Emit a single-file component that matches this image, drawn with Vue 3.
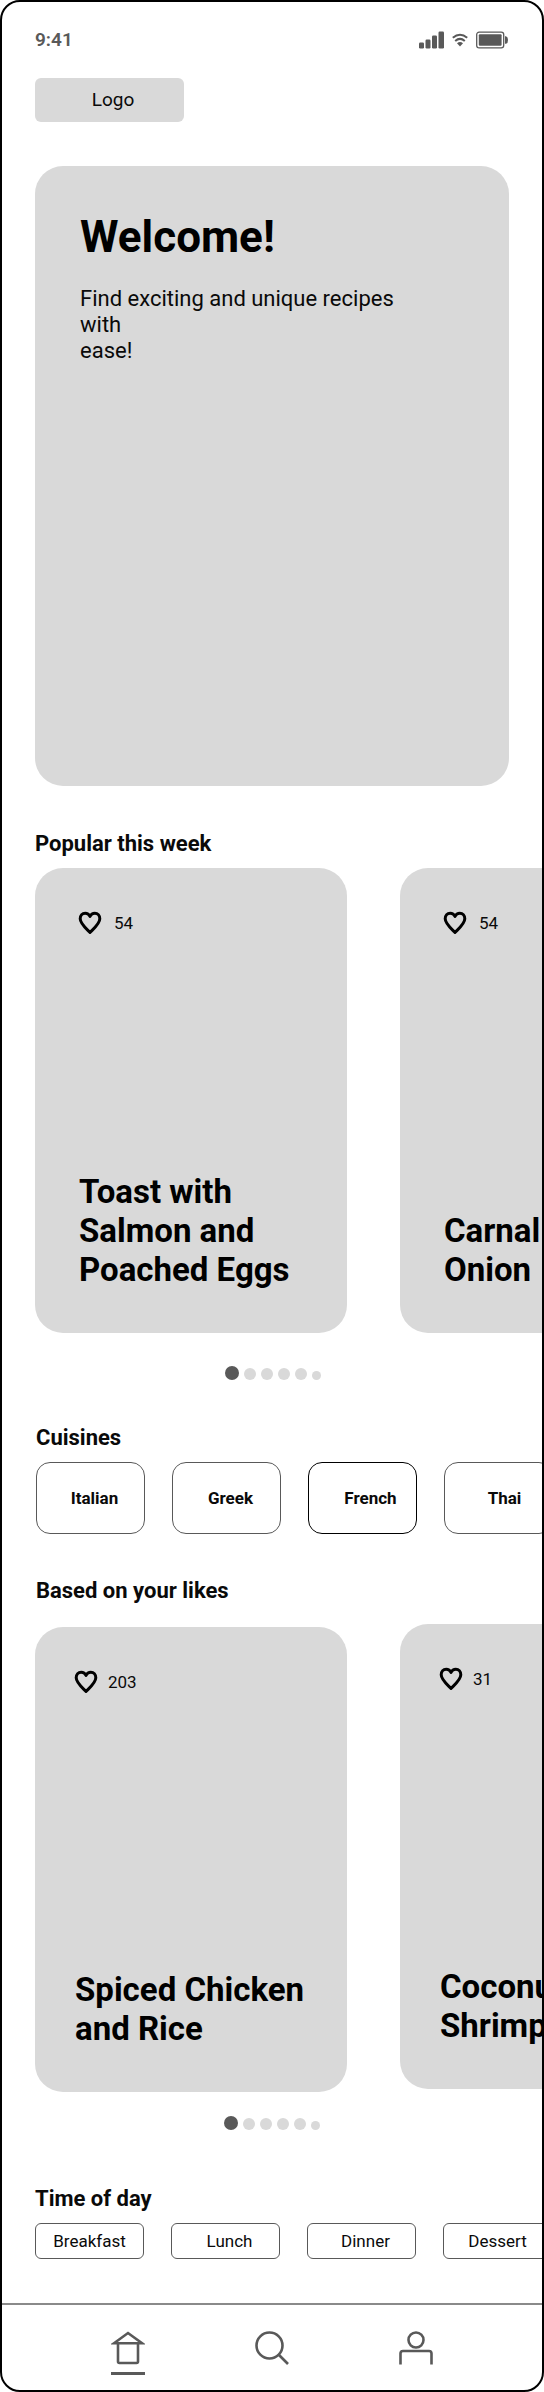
<script setup>
const popular = [
  { title: ['Toast with', 'Salmon and', 'Poached Eggs'], likes: 54 },
  { title: ['Carnal', 'Onion'], likes: 54 },
]
const liked = [
  { title: ['Spiced Chicken', 'and Rice'], likes: 203 },
  { title: ['Coconut', 'Shrimp'], likes: 31 },
]
const cuisines = ['Italian', 'Greek', 'French', 'Thai']
const times = ['Breakfast', 'Lunch', 'Dinner', 'Dessert']
</script>

<template>
  <div class="screen">
    <header class="status">
      <span class="clock">9:41</span>
      <span class="indicators">
        <svg width="25" height="18" viewBox="0 0 25 18" fill="#595959" aria-hidden="true">
          <rect x="0" y="11.5" width="5" height="6" rx="1.2" />
          <rect x="6.5" y="8.5" width="5" height="9" rx="1.2" />
          <rect x="13" y="4.5" width="5" height="13" rx="1.2" />
          <rect x="19.5" y="0.5" width="5.5" height="17" rx="1.2" />
        </svg>
        <svg width="16" height="18" viewBox="0 0 16 18" fill="none" stroke="#595959" stroke-width="2" aria-hidden="true">
          <path d="M0.8 6.8Q8 0.6 15.2 6.8" />
          <path d="M3.2 10Q8 5.8 12.8 10" />
          <path d="M5 12.2Q8 9.8 11 12.2L8 15.5Z" fill="#595959" stroke="none" />
        </svg>
        <svg width="32" height="18" viewBox="0 0 32 18" aria-hidden="true">
          <rect x="0.7" y="1.2" width="27" height="15.6" rx="2.4" fill="none" stroke="#595959" stroke-width="1.3" />
          <rect x="2.8" y="3.2" width="22.8" height="11.6" rx="1" fill="#595959" />
          <path d="M29 5.2h1q2 0.6 2 3.8t-2 3.8h-1z" fill="#595959" />
        </svg>
      </span>
    </header>

    <a class="logo" href="#">Logo</a>

    <section class="hero">
      <h1>Welcome!</h1>
      <p>Find exciting and unique recipes with<br />ease!</p>
    </section>

    <section class="popular">
      <h2>Popular this week</h2>
      <div class="cards">
        <article v-for="item in popular" :key="item.title[0]" class="card">
          <button class="like" type="button" aria-label="Like">
            <svg width="24" height="24" viewBox="0 0 24 24" fill="none" stroke="#000" stroke-width="3" stroke-linejoin="round" aria-hidden="true">
              <path d="M12 21.5C7.5 17 2.2 12.6 2.2 7.8C2.2 4.6 4.3 2.2 7.2 2.2C9.4 2.2 11 3.4 12 5.4C13 3.4 14.6 2.2 16.8 2.2C19.7 2.2 21.8 4.6 21.8 7.8C21.8 12.6 16.5 17 12 21.5Z" />
            </svg>
            <span>{{ item.likes }}</span>
          </button>
          <h3><span v-for="line in item.title" :key="line">{{ line }}</span></h3>
        </article>
      </div>
      <div class="dots"><i v-for="n in 6" :key="n"></i></div>
    </section>

    <section class="cuisines">
      <h2>Cuisines</h2>
      <div class="row">
        <button v-for="name in cuisines" :key="name" type="button" :class="['tile', name.toLowerCase()]">{{ name }}</button>
      </div>
    </section>

    <section class="liked">
      <h2>Based on your likes</h2>
      <div class="cards">
        <article v-for="item in liked" :key="item.title[0]" class="card">
          <button class="like" type="button" aria-label="Like">
            <svg width="24" height="24" viewBox="0 0 24 24" fill="none" stroke="#000" stroke-width="3" stroke-linejoin="round" aria-hidden="true">
              <path d="M12 21.5C7.5 17 2.2 12.6 2.2 7.8C2.2 4.6 4.3 2.2 7.2 2.2C9.4 2.2 11 3.4 12 5.4C13 3.4 14.6 2.2 16.8 2.2C19.7 2.2 21.8 4.6 21.8 7.8C21.8 12.6 16.5 17 12 21.5Z" />
            </svg>
            <span>{{ item.likes }}</span>
          </button>
          <h3><span v-for="line in item.title" :key="line">{{ line }}</span></h3>
        </article>
      </div>
      <div class="dots"><i v-for="n in 6" :key="n"></i></div>
    </section>

    <section class="times">
      <h2>Time of day</h2>
      <div class="row">
        <button v-for="name in times" :key="name" type="button" :class="['pill', name.toLowerCase()]">{{ name }}</button>
      </div>
    </section>

    <nav class="tabs" aria-label="Main">
      <a href="#" class="active" aria-label="Home">
        <svg width="34" height="34" viewBox="0 0 34 34" aria-hidden="true">
          <path d="M3 12.2L17 2L31 12.2ZM7 12.2V30.5Q7 32 8.5 32H25.5Q27 32 27 30.5V12.2" />
        </svg>
      </a>
      <a href="#" aria-label="Search">
        <svg width="34" height="34" viewBox="0 0 34 34" aria-hidden="true">
          <circle cx="14.5" cy="14.5" r="13" />
          <path d="M23.5 23.5L33 33" />
        </svg>
      </a>
      <a href="#" aria-label="Profile">
        <svg width="34" height="34" viewBox="0 0 34 34" aria-hidden="true">
          <circle cx="17" cy="9" r="7.5" />
          <path d="M1.5 33.5V22.5Q1.5 20 4 20H30Q32.5 20 32.5 22.5V33.5" />
        </svg>
      </a>
    </nav>
  </div>
</template>

<style>
body {
  margin: 0;
  background: #fff;
}
</style>

<style scoped>
* {
  box-sizing: border-box;
}
.screen {
  border: 2px solid #000;
  border-radius: 20px;
  overflow: hidden;
  background: #fff;
  color: #0a0a0a;
  font-family: Roboto, "Liberation Sans", sans-serif;
  display: flex;
  flex-direction: column;
}
h1,
h2,
h3,
p {
  margin: 0;
}
button {
  font-family: inherit;
  color: inherit;
  margin: 0;
  padding: 0;
  background: none;
}
h2 {
  font-size: 22px;
  line-height: 26px;
  font-weight: 700;
}
.status {
  display: flex;
  justify-content: space-between;
  align-items: center;
  height: 24px;
  margin: 26px 34px 0 33px;
}
.clock {
  font-size: 19px;
  line-height: 22px;
  font-weight: 600;
  color: #595959;
}
.indicators {
  display: flex;
  align-items: center;
  gap: 8px;
}
.logo {
  width: 149px;
  height: 44px;
  margin: 26px 0 0 33px;
  padding-left: 7px;
  border-radius: 6px;
  background: #d9d9d9;
  color: inherit;
  font-size: 19px;
  line-height: 44px;
  text-align: center;
  text-decoration: none;
}
.hero {
  min-height: 620px;
  margin: 44px 33px 0;
  padding: 45px;
  border-radius: 28px;
  background: #d9d9d9;
}
.hero h1 {
  font-size: 44px;
  line-height: 52px;
  font-weight: 700;
  color: #000;
}
.hero p {
  max-width: 340px;
  margin-top: 23px;
  font-size: 22px;
  line-height: 26px;
}
.popular {
  margin: 45px 0 0 33px;
}
.cards {
  display: flex;
  gap: 53px;
  overflow: hidden;
}
.card {
  flex: 0 0 312px;
  height: 465px;
  padding: 43px 36px 44px 43px;
  border-radius: 28px;
  background: #d9d9d9;
  display: flex;
  flex-direction: column;
  justify-content: space-between;
  align-items: flex-start;
}
.popular .cards {
  margin-top: 11px;
}
.like {
  display: flex;
  align-items: center;
  gap: 12px;
  border: 0;
  font-size: 17px;
  line-height: 24px;
}
h3 {
  padding-left: 1px;
  font-size: 33px;
  line-height: 39px;
  font-weight: 700;
  color: #000;
}
h3 span {
  display: block;
  white-space: nowrap;
}
.dots {
  display: flex;
  justify-content: center;
  align-items: flex-end;
  gap: 5px;
  margin: 33px 32px 0 0;
}
.dots i {
  width: 12px;
  height: 12px;
  border-radius: 50%;
  background: #d9d9d9;
}
.dots i:first-child {
  width: 14px;
  height: 14px;
  background: #595959;
}
.dots i:last-child {
  width: 9px;
  height: 9px;
}
.cuisines {
  margin: 45px 0 0 34px;
}
.row {
  display: flex;
  gap: 27px;
  margin-top: 11px;
  overflow: hidden;
}
.tile,
.pill {
  flex: 0 0 109px;
  border: 1px solid #595959;
  font-size: 17px;
}
.tile {
  height: 72px;
  border-radius: 14px;
  font-weight: 700;
  padding-left: 8px;
}
.tile.french {
  border-color: #000;
  padding-left: 16px;
}
.tile.thai {
  padding-left: 12px;
}
.liked {
  margin: 44px 0 0 33px;
}
.liked h2 {
  padding-left: 1px;
}
.liked .cards {
  margin-top: 20px;
}
.liked .card {
  padding-left: 39px;
}
.liked .card:first-child {
  margin-top: 3px;
}
.liked .like {
  gap: 10px;
}
.liked .dots {
  margin-top: 24px;
  margin-right: 34px;
}
.times {
  margin: 56px 0 0 33px;
}
.pill {
  height: 36px;
  border-radius: 6px;
}
.pill.lunch,
.pill.dinner {
  padding-left: 8px;
}
.tabs {
  display: grid;
  grid-template-columns: repeat(3, 1fr);
  margin-top: 44px;
  padding: 26px 54px 0;
  height: 87px;
  border-top: 2px solid #8a8a8a;
}
.tabs a {
  justify-self: center;
  height: 44px;
}
.tabs svg {
  display: block;
  fill: none;
  stroke: #595959;
  stroke-width: 2.6;
}
.tabs .active {
  border-bottom: 3px solid #595959;
}
</style>
